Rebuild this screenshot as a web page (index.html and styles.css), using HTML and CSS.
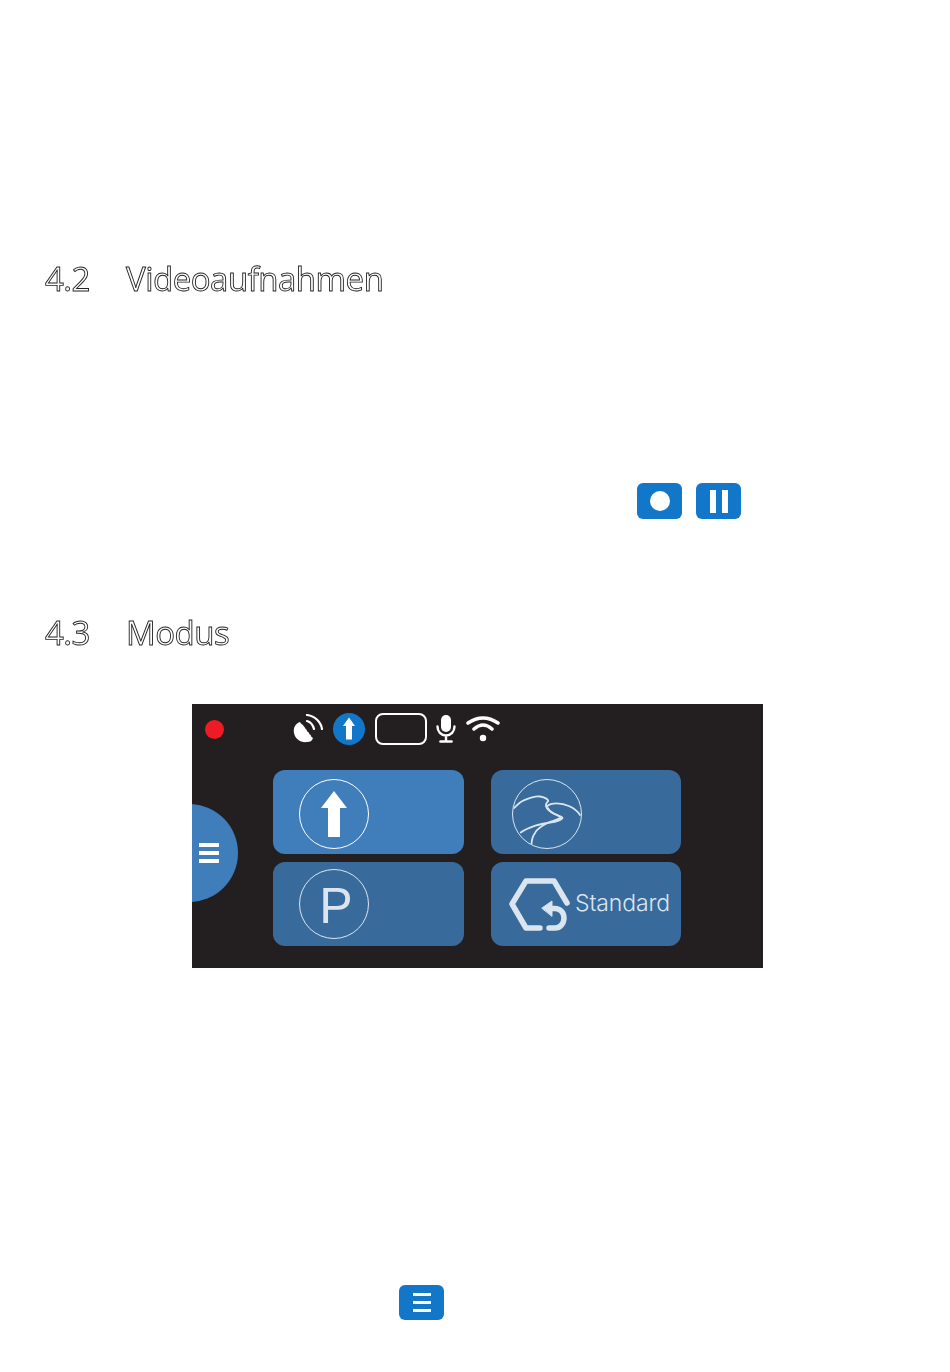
FILE: index.html
```html
<!DOCTYPE html>
<html lang="de">
<head>
<meta charset="utf-8">
<title>Videoaufnahmen und Modus</title>
<link rel="stylesheet" href="styles.css">
</head>
<body>
<main class="page">
  <h2 class="heading heading-video"><span class="num">4.2</span><span>Videoaufnahmen</span></h2>
  <div class="button-row">
    <span class="btn"><span class="rec-dot"></span></span>
    <span class="btn btn-pause"><span class="pause-bar"></span><span class="pause-bar"></span></span>
  </div>
  <h2 class="heading heading-mode"><span class="num">4.3</span><span>Modus</span></h2>
  <section class="screen">
    <div class="status">
      <span class="status-dot"></span>
      <svg class="i-sat" width="32" height="30" viewBox="0 0 32 30" fill="none">
        <path d="M7 8C2 10 0 14 1 19c1 6 7 10 13 9 3 0 5-1 6-4-1-1-2-1-2-2 0-2-2-1-2-3 0-1-2-1-2-2 0-2-2-2-2-3 0-1-2-2-2-3-1-1-2-1-3-3z" fill="#fff"/>
        <path d="M14 7c4 1 6 4 7 8M14 1c8 1 14 7 15 14" stroke="#fff" stroke-width="2.200" stroke-linecap="round"/>
      </svg>
      <svg class="i-up" width="32" height="32" viewBox="0 0 32 32">
        <circle cx="16" cy="16" r="16" fill="#1277c9"/>
        <path d="M16 4.500l6 8.500h-3v13.500h-6v-13.500h-3z" fill="#fff"/>
      </svg>
      <span class="status-box"></span>
      <svg class="i-mic" width="20" height="30" viewBox="0 0 20 30" fill="none">
        <rect x="5" y="1" width="10" height="17" rx="5" fill="#fff"/>
        <path d="M1.500 12.500c0 5 3.500 9 8.500 9s8.500-4 8.500-9M10 21.500v5" stroke="#fff" stroke-width="2.400" stroke-linecap="round"/>
        <path d="M4.500 27.500h11" stroke="#fff" stroke-width="2.600" stroke-linecap="round"/>
      </svg>
      <svg class="i-wifi" width="34" height="28" viewBox="0 0 34 28" fill="none">
        <path d="M2 8Q17-2 32 8M8 14Q17 6 26 14" stroke="#fff" stroke-width="3.500" stroke-linecap="round"/>
        <circle cx="17" cy="23" r="3.200" fill="#fff"/>
      </svg>
    </div>
    <div class="tiles">
      <div class="tile tile-active">
        <span class="ring ring-low">
          <svg width="28" height="48" viewBox="0 0 28 48"><path d="M14 1l13 17h-7v29H8V18H1z" fill="#fff"/></svg>
        </span>
      </div>
      <div class="tile">
        <span class="ring ring-thin ring-low">
          <svg width="70" height="70" viewBox="0 0 70 70" fill="none" stroke="#dbe5f0" stroke-width="1.900" stroke-linecap="round" stroke-linejoin="round">
            <path d="M1 29C5 25 8 22 11 21 18 18 24 16 28 17 33 18 37 20 36 22 34 24 33 26 35 27 37 25 41 24 45 24 53 24 64 28 69 36"/>
            <path d="M34 27C35 31 39 33 43 35 47 37 51 38 51 39 50 41 47 42 43 43 36 44 29 45 23 47 17 49 12 51 8 54"/>
            <path d="M36 29C38 33 42 35 45 36 47 37 49 38 49 39 46 41 41 42 36 44 30 47 25 50 23 54 20 58 19 62 19 67"/>
          </svg>
        </span>
      </div>
      <div class="tile">
        <span class="ring ring-thin"><span class="ring-letter">P</span></span>
      </div>
      <div class="tile tile-std">
        <svg class="i-hex" width="62" height="56" viewBox="0 0 62 56" fill="none" stroke="#dbe5f0" stroke-width="5.500" stroke-linecap="round" stroke-linejoin="round">
          <path d="M58 26L45 4H17L3 27l14 24h14"/>
          <path d="M42 31.500h4c5 0 9 4 9 9.500s-4 10-9 10h-6"/>
          <path d="M33 31l10-7v15z" fill="#dbe5f0" stroke-width="1"/>
        </svg>
        <span class="std-label">Standard</span>
      </div>
    </div>
    <div class="side-tab">
      <span class="bars"><span></span><span></span><span></span></span>
    </div>
  </section>
  <div class="menu-row">
    <span class="btn btn-menu"><span class="bars"><span></span><span></span><span></span></span></span>
  </div>
</main>
</body>
</html>
```
FILE: styles.css
```css
html, body {
  margin: 0;
  padding: 0;
  background: #fff;
}
.page {
  height: 1372px;
  overflow: hidden;
  display: flow-root;
  font-family: "Open Sans", "Liberation Sans", sans-serif;
}
.heading {
  display: flex;
  margin: 0;
  padding-left: 45px;
  height: 44px;
  align-items: center;
  font-size: 33px;
  font-weight: 400;
  letter-spacing: -0.5px;
  color: #fff;
  -webkit-text-stroke: 0.9px #222;
  will-change: opacity;
}
.num {
  width: 81px;
}
.heading-video {
  margin-top: 256px;
}
.heading-mode {
  margin-top: 91px;
}
.button-row {
  display: flex;
  gap: 14px;
  margin-top: 183px;
  padding-left: 637px;
}
.btn {
  display: flex;
  align-items: center;
  justify-content: center;
  width: 45px;
  height: 36px;
  border-radius: 6px;
  background: #1277c9;
}
.rec-dot {
  width: 20px;
  height: 20px;
  border-radius: 50%;
  background: #fff;
}
.btn-pause {
  gap: 6px;
}
.pause-bar {
  width: 6px;
  height: 23px;
  background: #fff;
}
.screen {
  position: relative;
  overflow: hidden;
  box-sizing: border-box;
  width: 571px;
  height: 264px;
  margin: 50px 0 0 192px;
  background: #231f20;
}
.status {
  display: flex;
  align-items: center;
  height: 32px;
  margin-top: 9px;
  padding-left: 13px;
}
.status-dot {
  width: 19px;
  height: 19px;
  border-radius: 50%;
  background: #ed1c24;
}
.i-sat {
  margin-left: 69px;
}
.i-up {
  margin-left: 8px;
}
.status-box {
  box-sizing: border-box;
  width: 52px;
  height: 32px;
  margin-left: 10px;
  border: 2px solid #fff;
  border-radius: 8px;
}
.i-mic {
  margin-left: 9px;
}
.i-wifi {
  margin-left: 10px;
}
.tiles {
  display: grid;
  grid-template-columns: 191px 190px;
  grid-auto-rows: 84px;
  gap: 8px 27px;
  margin: 25px 0 0 81px;
}
.tile {
  display: flex;
  align-items: center;
  padding-left: 21px;
  border-radius: 12px;
  background: #386b9c;
}
.tile-active {
  padding-left: 26px;
  background: #3f7dbb;
}
.tile:nth-child(3) {
  padding-left: 26px;
}
.ring {
  display: flex;
  align-items: center;
  justify-content: center;
  flex: none;
  box-sizing: border-box;
  width: 70px;
  height: 70px;
  overflow: hidden;
  border: 1.5px solid #fff;
  border-radius: 50%;
}
.ring-low {
  margin-top: 4px;
}
.ring-thin {
  border: 1px solid #dbe5f0;
}
.ring-letter {
  margin: 3px 0 0 4px;
  font-family: "Liberation Sans", Arial, sans-serif;
  font-size: 50px;
  line-height: 1;
  color: #dbe5f0;
}
.tile-std {
  padding-left: 18px;
}
.i-hex {
  flex: none;
  margin-top: 1px;
}
.std-label {
  margin: -2px 0 0 4px;
  font-family: Inter, "Liberation Sans", sans-serif;
  font-weight: 300;
  font-size: 23px;
  letter-spacing: -0.1px;
  color: #dbe5f0;
}
.side-tab {
  position: absolute;
  left: -52px;
  top: 100px;
  box-sizing: border-box;
  display: flex;
  align-items: center;
  width: 98px;
  height: 98px;
  padding-left: 59px;
  border-radius: 50%;
  background: #3f7dbb;
}
.bars {
  display: flex;
  flex-direction: column;
  gap: 4px;
  width: 20px;
}
.bars span {
  height: 4px;
  background: #fff;
}
.menu-row {
  margin-top: 317px;
  padding-left: 399px;
}
.btn-menu {
  height: 35px;
}
.btn-menu .bars {
  gap: 5px;
  width: 18px;
}
.btn-menu .bars span {
  height: 3px;
}
```
